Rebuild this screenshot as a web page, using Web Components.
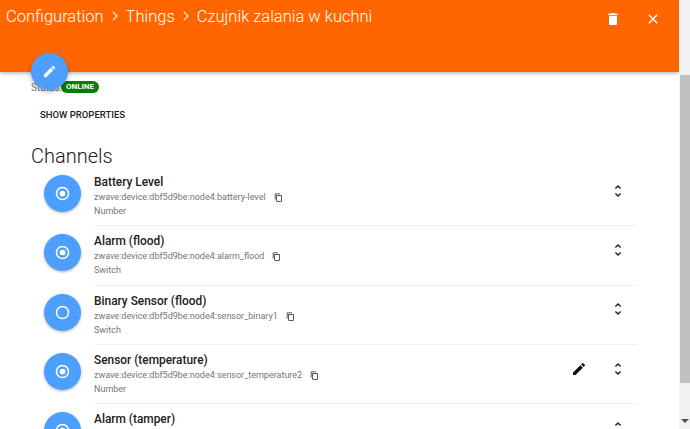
<!DOCTYPE html>
<html>
<head>
<meta charset="utf-8">
<title>Things</title>
<style>
  html, body { margin: 0; height: 429px; overflow: hidden; background: #fff; }
  body { font-family: Roboto, "Liberation Sans", sans-serif; color: #212121; }
</style>
</head>
<body>
<thing-page>
  <thing-status slot="head"></thing-status>
  <channel-row name="Battery Level" uid="zwave:device:dbf5d9be:node4:battery-level" kind="Number" linked></channel-row>
  <channel-row name="Alarm (flood)" uid="zwave:device:dbf5d9be:node4:alarm_flood" kind="Switch" linked></channel-row>
  <channel-row name="Binary Sensor (flood)" uid="zwave:device:dbf5d9be:node4:sensor_binary1" kind="Switch"></channel-row>
  <channel-row name="Sensor (temperature)" uid="zwave:device:dbf5d9be:node4:sensor_temperature2" kind="Number" linked editable></channel-row>
  <channel-row name="Alarm (tamper)" linked></channel-row>
</thing-page>

<script>
const PATHS = {
  pencil: "M3 17.25V21h3.75L17.81 9.94l-3.75-3.75L3 17.25zM20.71 7.04a1 1 0 0 0 0-1.41l-2.34-2.34a1 1 0 0 0-1.41 0l-1.83 1.83 3.75 3.75 1.83-1.83z",
  trash: "M6 19c0 1.1.9 2 2 2h8c1.1 0 2-.9 2-2V7H6v12zM19 4h-3.5l-1-1h-5l-1 1H5v2h14V4z",
  close: "M19 6.41 17.59 5 12 10.59 6.41 5 5 6.41 10.59 12 5 17.59 6.41 19 12 13.41 17.59 19 19 17.59 13.41 12z",
  unfold: "M12 5.83 15.17 9l1.41-1.41L12 3 7.41 7.59 8.83 9 12 5.83zm0 12.34L8.83 15l-1.41 1.41L12 21l4.59-4.59L15.17 15 12 18.17z",
  copy: "M16 1H4c-1.1 0-2 .9-2 2v14h2V3h12V1zm3 4H8c-1.1 0-2 .9-2 2v14c0 1.1.9 2 2 2h11c1.1 0 2-.9 2-2V7c0-1.1-.9-2-2-2zm0 16H8V7h11v14z",
  chevron: "M10 6 8.59 7.41 13.17 12l-4.58 4.59L10 18l6-6z"
};

function icon(name, size, color) {
  return `<svg width="${size}" height="${size}" viewBox="0 0 24 24" fill="${color}" style="display:block;flex:none"><path d="${PATHS[name]}"/></svg>`;
}

class ThingPage extends HTMLElement {
  constructor() {
    super();
    this.attachShadow({ mode: "open" });
    this.shadowRoot.innerHTML = `
<style>
  :host { display: grid; grid-template-columns: 679px 11px; height: 429px; overflow: hidden; }
  .main { display: flex; flex-direction: column; height: 429px; overflow: hidden; position: relative; }
  .content { padding: 0 42px 0 31px; }
  .track { display: flex; flex-direction: column; background: #f1f1f1; height: 429px; }
  .gap { height: 75px; }
  .thumb { height: 308px; background: #c1c1c1; margin-left: 1px; }
  .rest { flex: 1; display: flex; align-items: flex-end; justify-content: center; padding-bottom: 6px; }
  .arrow { width: 0; height: 0; border: 4px solid transparent; border-top: 4px solid #505050; border-bottom: 0; }
  h2 { font-weight: 300; font-size: 20px; line-height: 22px; margin: 24px 0 0; color: #212121; }
  .list { display: flex; flex-direction: column; }
  .fab { position: absolute; left: 31px; top: 53px; width: 37px; height: 37px; border-radius: 50%;
    background: #4d9fff; display: flex; align-items: center; justify-content: center;
    box-shadow: 0 2px 5px rgba(0,0,0,.3); z-index: 3; }
</style>
<div class="main">
  <title-bar></title-bar>
  <div class="fab">${icon("pencil", 15, "#fff")}</div>
  <div class="content">
    <slot name="head"></slot>
    <h2>Channels</h2>
    <div class="list"><slot></slot></div>
  </div>
</div>
<div class="track">
  <div class="gap"></div>
  <div class="thumb"></div>
  <div class="rest"><div class="arrow"></div></div>
</div>`;
  }
}

class TitleBar extends HTMLElement {
  constructor() {
    super();
    this.attachShadow({ mode: "open" });
    this.shadowRoot.innerHTML = `
<style>
  :host { display: flex; flex: none; height: 72px; background: #ff6600; color: #fff; padding: 4px 18px 0 6px;
    box-sizing: border-box; box-shadow: 0 1px 4px rgba(0,0,0,.35); position: relative; z-index: 2; }
  .crumbs { display: flex; align-items: center; height: 24px; font-size: 16.5px; font-weight: 300; white-space: nowrap; }
  .crumbs svg { margin: 0 2px; }
  .tools { margin-left: auto; display: flex; align-items: center; gap: 24px; height: 30px; }
</style>
<div class="crumbs">Configuration ${icon("chevron", 18, "#ffd9bf")} Things ${icon("chevron", 18, "#ffd9bf")} Czujnik zalania w kuchni</div>
<div class="tools">${icon("trash", 16, "#fff")}${icon("close", 16, "#fff")}</div>`;
  }
}

class ThingStatus extends HTMLElement {
  constructor() {
    super();
    this.attachShadow({ mode: "open" });
    this.shadowRoot.innerHTML = `
<style>
  :host { display: block; }
  .line { display: flex; align-items: center; gap: 0; height: 12px; margin-top: 9px; font-size: 10px; color: #757575; }
  .badge { background: #008000; color: #fff; font-size: 8px; font-weight: 700; line-height: 12px; padding: 0 5px; border-radius: 6px; }
  .label { width: 30px; }
  .btn { display: block; margin: 16px 0 0 9px; font-size: 9.5px; font-weight: 500; line-height: 12px; color: #212121; }
</style>
<div class="line"><span class="label">Status:</span><span class="badge">ONLINE</span></div>
<span class="btn">SHOW PROPERTIES</span>`;
  }
}

class ChannelRow extends HTMLElement {
  constructor() {
    super();
    this.attachShadow({ mode: "open" });
    const linked = this.hasAttribute("linked");
    const dot = linked ? `<circle cx="12" cy="12" r="3.6" fill="#fff"/>` : "";
    const edit = this.hasAttribute("editable") ? icon("pencil", 16, "#111") : "";
    const uid = this.getAttribute("uid");
    const sub = uid ? `<div class="uid"><span>${uid}</span>${icon("copy", 9, "#222")}</div>
    <div class="kind">${this.getAttribute("kind")}</div>` : "";
    this.shadowRoot.innerHTML = `
<style>
  :host { display: flex; align-items: flex-start; height: 59.35px; box-sizing: border-box; }
  .avatar { flex: none; width: 37px; height: 37px; margin: 8px 13px 0 13px; border-radius: 50%; background: #4d9fff;
    display: flex; align-items: center; justify-content: center; box-shadow: 0 1px 3px rgba(0,0,0,.3); }
  .body { flex: 1; height: 100%; display: flex; border-bottom: 1px solid #f0f0f0; box-sizing: border-box; min-width: 0; }
  .text { flex: 1; min-width: 0; padding-top: 7px; }
  .name { font-size: 11.9px; font-weight: 500; line-height: 16px; color: #212121; }
  .uid { display: flex; align-items: center; gap: 8px; font-size: 9px; line-height: 13px; margin-top: 1px; color: #757575; }
  .kind { font-size: 9px; line-height: 13px; margin-top: 1px; color: #757575; }
  .acts { display: flex; align-items: center; height: 37px; margin-top: 5px; flex: none; }
  .edit { display: flex; justify-content: center; width: 20px; margin-right: 21px; }
  .more { margin-right: 11px; }
</style>
<div class="avatar"><svg width="19" height="19" viewBox="0 0 24 24" style="display:block"><circle cx="12" cy="12" r="7.6" fill="none" stroke="#fff" stroke-width="2"/>${dot}</svg></div>
<div class="body">
  <div class="text">
    <div class="name">${this.getAttribute("name")}</div>
    ${sub}
  </div>
  <div class="acts">
    <div class="edit">${edit}</div>
    <div class="more">${icon("unfold", 16, "#212121")}</div>
  </div>
</div>`;
  }
}

customElements.define("title-bar", TitleBar);
customElements.define("thing-status", ThingStatus);
customElements.define("channel-row", ChannelRow);
customElements.define("thing-page", ThingPage);
</script>
</body>
</html>
